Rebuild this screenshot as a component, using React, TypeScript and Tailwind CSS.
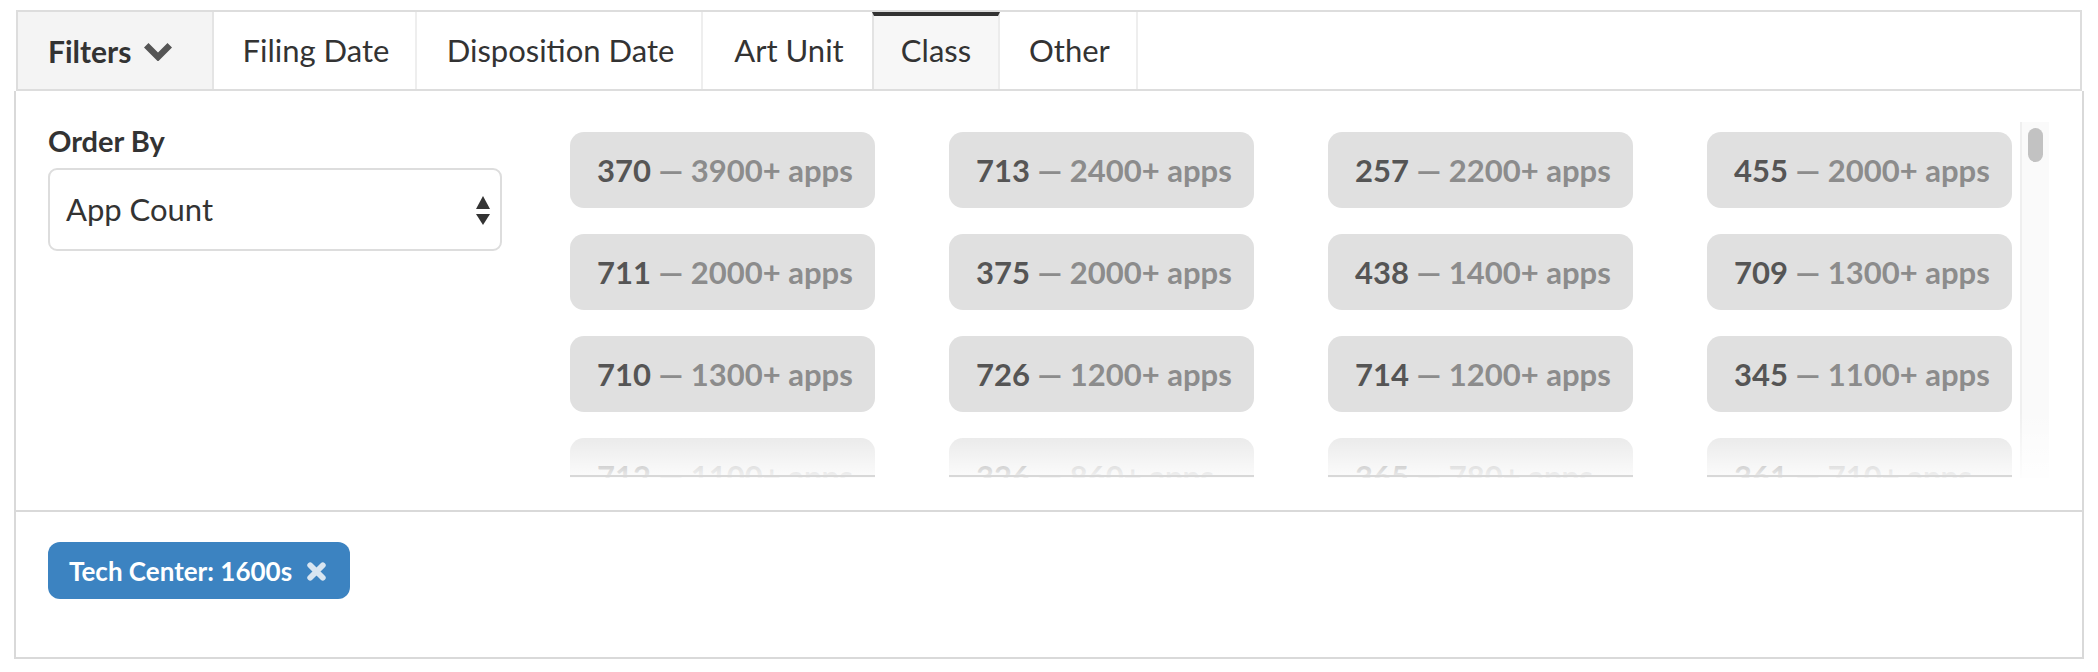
import React from "react";

const tabs = [
  { label: "Filing Date", w: "w-[203px]", border: true },
  { label: "Disposition Date", w: "w-[286px]", border: true },
  { label: "Art Unit", w: "w-[169px]", border: false },
  { label: "Class", w: "w-[128px]", active: true },
  { label: "Other", w: "w-[138px]", border: true },
];

const pills: [string, string][] = [
  ["370", "3900+"],
  ["713", "2400+"],
  ["257", "2200+"],
  ["455", "2000+"],
  ["711", "2000+"],
  ["375", "2000+"],
  ["438", "1400+"],
  ["709", "1300+"],
  ["710", "1300+"],
  ["726", "1200+"],
  ["714", "1200+"],
  ["345", "1100+"],
  ["712", "1100+"],
  ["326", "860+"],
  ["365", "780+"],
  ["361", "710+"],
];

export default function App() {
  return (
    <div
      className="w-[2098px] h-[672px] bg-white pt-[10px] pl-[14px] text-[#333]"
      style={{ fontFamily: "Lato, 'Open Sans', sans-serif" }}
    >
      <div className="w-[2070px]">
        {/* Tab row */}
        <div className="mx-[2px] h-[81px] border-2 border-[#dddddd] flex">
          <div className="w-[196px] bg-[#f4f4f4] border-r-2 border-[#e4e4e4] flex items-center pl-[30px] gap-[13px]">
            <span className="text-[30px] font-bold leading-none">Filters</span>
            <svg width="28" height="18" viewBox="0 0 28 18" className="mt-[3px]">
              <polygon points="0,4.5 4.5,0 14,9.5 23.5,0 28,4.5 14,18.5" fill="#555" />
            </svg>
          </div>
          {tabs.map((t) =>
            t.active ? (
              <div
                key={t.label}
                className={`${t.w} bg-[#f7f7f7] border-t-4 border-t-[#333] border-l-2 border-l-[#e3e3e3] border-r-2 border-r-[#ececec] flex items-center justify-center pb-[4px]`}
              >
                <span className="text-[31px] leading-none">{t.label}</span>
              </div>
            ) : (
              <div
                key={t.label}
                className={`${t.w} ${t.border ? "border-r-2 border-[#eeeeee]" : ""} flex items-center justify-center pl-[3px]`}
              >
                <span className="text-[31px] leading-none">{t.label}</span>
              </div>
            )
          )}
        </div>

        {/* Panel */}
        <div className="border-2 border-t-0 border-[#d9d9d9]">
          <div className="h-[419px] flex">
            {/* Left column */}
            <div className="pl-[32px] pt-[33px] w-[488px] shrink-0">
              <div className="text-[29px] font-bold leading-[34px]">Order By</div>
              <div className="mt-[10px] w-[454px] h-[83px] border-2 border-[#dddddd] rounded-[9px] flex items-center justify-between pl-[16px] pr-[10px]">
                <span className="text-[31px] leading-none">App Count</span>
                <svg width="14" height="30" viewBox="0 0 14 30" className="mt-[2px]">
                  <polygon points="0,13 7,0 14,13" fill="#333" />
                  <polygon points="0,18 14,18 7,29" fill="#333" />
                </svg>
              </div>
            </div>

            {/* Scroll area */}
            <div className="ml-[66px] mt-[31px] h-[356px] w-[1479px] relative overflow-hidden flex">
              <div className="pt-[10px] w-[1450px]">
                <div className="grid grid-cols-[305px_305px_305px_305px] gap-x-[74px] gap-y-[26px]">
                  {pills.map(([n, c]) => (
                    <div
                      key={n}
                      className="h-[76px] bg-[#e0e0e0] rounded-[14px] flex items-center pl-[27px] text-[31px] font-bold leading-none whitespace-nowrap"
                    >
                      <span className="text-[#555]">{n}</span>
                      <span className="text-[#8c8c8c]">&nbsp;— {c} apps</span>
                    </div>
                  ))}
                </div>
              </div>
              <div className="ml-[5px] w-[29px] h-full bg-[#fafafa] border-l-2 border-[#efefef] pt-[6px] flex justify-center">
                <div className="w-[15px] h-[34px] rounded-full bg-[#c2c2c2]" />
              </div>
              <div className="absolute left-0 right-0 bottom-0 h-[66px] bg-gradient-to-b from-white/0 to-white/90" />
              <div className="absolute left-0 bottom-[1px] grid grid-cols-[305px_305px_305px_305px] gap-x-[74px]">
                <div className="h-[2px] bg-[#d8d8d8]" />
                <div className="h-[2px] bg-[#d8d8d8]" />
                <div className="h-[2px] bg-[#d8d8d8]" />
                <div className="h-[2px] bg-[#d8d8d8]" />
              </div>
            </div>
          </div>

          <div className="h-[2px] bg-[#d9d9d9]" />

          <div className="h-[145px] pl-[32px] pt-[30px]">
            <div className="inline-flex items-center h-[57px] rounded-[12px] bg-[#3c83c1] pl-[21px] pr-[23px] gap-[14px]">
              <span className="text-[26px] font-bold text-white leading-none">Tech Center: 1600s</span>
              <svg width="21" height="21" viewBox="0 0 20 20" className="mt-[1px]">
                <path d="M4 4 L16 16 M16 4 L4 16" stroke="#d8e5f1" strokeWidth="5.5" strokeLinecap="round" />
              </svg>
            </div>
          </div>
        </div>
      </div>
    </div>
  );
}
